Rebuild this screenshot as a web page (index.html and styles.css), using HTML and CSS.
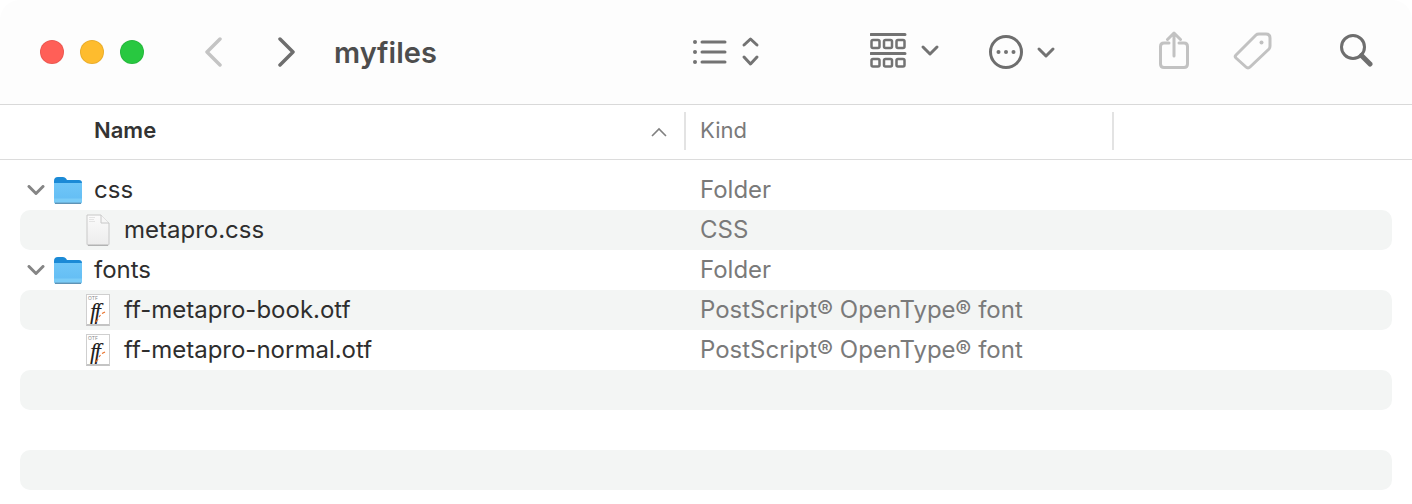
FILE: index.html
```html
<!DOCTYPE html>
<html lang="en">
<head>
    <meta charset="UTF-8">
    <title>myfiles</title>
    <link rel="stylesheet" href="styles.css">
</head>
<body>
    <svg class="defs" width="0" height="0">
        <defs>
            <linearGradient id="folder-body" x1="0" y1="0" x2="0" y2="1">
                <stop offset="0" stop-color="#6fc6f8"/>
                <stop offset="1" stop-color="#62bcf3"/>
            </linearGradient>
            <linearGradient id="doc-body" x1="0" y1="0" x2="0" y2="1">
                <stop offset="0" stop-color="#fbfbfb"/>
                <stop offset="1" stop-color="#ececec"/>
            </linearGradient>
            <symbol id="folder-shape" viewBox="0 0 28 27">
                <path d="M0 4 Q0 0 4 0 H9 Q11 0 12 1.5 L13 3 H25 Q28 3 28 6 V12 H0 Z" fill="#1b8ad6"/>
                <path d="M0 6 H28 V24 Q28 27 25 27 H3 Q0 27 0 24 Z" fill="url(#folder-body)"/>
                <path d="M0 21.5 H28 V24 Q28 27 25 27 H3 Q0 27 0 24 Z" fill="#7accf7"/>
                <path d="M1 26.3 H27" stroke="#5f93b5" stroke-width="1.4" fill="none"/>
            </symbol>
        </defs>
    </svg>

    <div class="window">
        <div class="toolbar">
            <div class="lights">
                <span class="light red"></span>
                <span class="light yellow"></span>
                <span class="light green"></span>
            </div>
            <svg class="nav nav-back" width="20" height="30" viewBox="0 0 20 30"><path d="M17 2 L4 15 L17 28" class="stroke-light"/></svg>
            <svg class="nav nav-forward" width="20" height="30" viewBox="0 0 20 30"><path d="M3 2 L16 15 L3 28" class="stroke-dark"/></svg>
            <div class="title">myfiles</div>
            <svg class="tool tool-list" width="70" height="32" viewBox="0 0 70 32">
                <path d="M11 6 H34 M11 16 H34 M11 26 H34" class="stroke-mid"/>
                <path d="M53 9 L59.5 3 L66 9 M53 21 L59.5 28 L66 21" class="stroke-mid"/>
                <circle cx="4" cy="6" r="2" class="fill-mid"/>
                <circle cx="4" cy="16" r="2" class="fill-mid"/>
                <circle cx="4" cy="26" r="2" class="fill-mid"/>
            </svg>
            <svg class="tool tool-group" width="70" height="36" viewBox="0 0 70 36">
                <path d="M1 1.5 H35 M1 20.5 H35" class="stroke-mid"/>
                <g class="box">
                    <rect x="1.5" y="7" width="8" height="8" rx="1.5"/>
                    <rect x="14" y="7" width="8" height="8" rx="1.5"/>
                    <rect x="26.5" y="7" width="8" height="8" rx="1.5"/>
                    <rect x="1.5" y="26" width="8" height="7.5" rx="1.5"/>
                    <rect x="14" y="26" width="8" height="7.5" rx="1.5"/>
                    <rect x="26.5" y="26" width="8" height="7.5" rx="1.5"/>
                </g>
                <path d="M53 14 L60 21 L67 14" class="stroke-mid"/>
            </svg>
            <svg class="tool tool-more" width="68" height="36" viewBox="0 0 68 36">
                <circle cx="18" cy="18" r="15.5" class="ring"/>
                <circle cx="10.5" cy="18" r="2" class="fill-mid"/>
                <circle cx="18" cy="18" r="2" class="fill-mid"/>
                <circle cx="25.5" cy="18" r="2" class="fill-mid"/>
                <path d="M51 15 L58 22 L65 15" class="stroke-mid"/>
            </svg>
            <svg class="tool tool-share" width="30" height="38" viewBox="0 0 30 38">
                <path d="M10 12 H5 Q1.5 12 1.5 15.5 V33 Q1.5 36.5 5 36.5 H25 Q28.5 36.5 28.5 33 V15.5 Q28.5 12 25 12 H20" class="thin-light"/>
                <path d="M15 25 V2.5 M8.5 8.5 L15 2 L21.5 8.5" class="thin-light"/>
            </svg>
            <svg class="tool tool-tag" width="40" height="40" viewBox="0 0 40 40">
                <path d="M3 25 L23 5 Q24 4 26 4 H33 Q37 4 37 8 V16 Q37 18 36 19 L17 37 Q15 39 13 37 L3 28 Q1.5 26.5 3 25 Z" class="thin-light"/>
                <circle cx="28.5" cy="12.5" r="2" class="fill-light"/>
            </svg>
            <svg class="tool tool-search" width="34" height="34" viewBox="0 0 34 34">
                <circle cx="14" cy="14" r="11.5" class="ring"/>
                <path d="M22.5 22.5 L31 31" class="stroke-handle"/>
            </svg>
        </div>

        <div class="columns">
            <div class="col col-name">
                <span class="col-text">Name</span>
                <svg class="sort" width="16" height="10" viewBox="0 0 16 10"><path d="M1 9 L8 2 L15 9"/></svg>
            </div>
            <div class="col col-kind"><span class="col-text">Kind</span></div>
            <div class="col col-rest"></div>
        </div>

        <div class="rows">
            <div class="row">
                <div class="name">
                    <svg class="disclosure" width="18" height="10" viewBox="0 0 18 10"><path d="M2 1.5 L9 8.5 L16 1.5"/></svg>
                    <svg class="folder" width="28" height="27" viewBox="0 0 28 27"><use href="#folder-shape"/></svg>
                    <span class="label">css</span>
                </div>
                <div class="kind label">Folder</div>
            </div>
            <div class="row striped">
                <div class="name child">
                    <svg class="doc" width="24" height="32" viewBox="0 0 24 32">
                        <path d="M1 1 H15 L23 9 V30 Q23 31 22 31 H2 Q1 31 1 30 Z" fill="url(#doc-body)" stroke="#c8c8c8"/>
                        <path d="M15 1 V9 H23" fill="#f6f6f6" stroke="#c8c8c8"/>
                        <path d="M2 31.3 H22" fill="none" stroke="#a8a8a8"/>
                        <path d="M3 3.5 H9 M3 5.5 H8 M3 7.5 H9" fill="none" stroke="#e4e4e4"/>
                    </svg>
                    <span class="label">metapro.css</span>
                </div>
                <div class="kind label">CSS</div>
            </div>
            <div class="row">
                <div class="name">
                    <svg class="disclosure" width="18" height="10" viewBox="0 0 18 10"><path d="M2 1.5 L9 8.5 L16 1.5"/></svg>
                    <svg class="folder" width="28" height="27" viewBox="0 0 28 27"><use href="#folder-shape"/></svg>
                    <span class="label">fonts</span>
                </div>
                <div class="kind label">Folder</div>
            </div>
            <div class="row striped">
                <div class="name child">
                    <div class="font-icon">
                        <span class="otf">OTF</span>
                        <span class="ff">ff</span>
                        <svg class="ff-marks" width="12" height="12" viewBox="0 0 12 12"><path d="M1 11 L3 8 M4 6 L5.5 4 M7 2.5 L10 1"/></svg>
                    </div>
                    <span class="label">ff-metapro-book.otf</span>
                </div>
                <div class="kind label">PostScript® OpenType® font</div>
            </div>
            <div class="row">
                <div class="name child">
                    <div class="font-icon">
                        <span class="otf">OTF</span>
                        <span class="ff">ff</span>
                        <svg class="ff-marks" width="12" height="12" viewBox="0 0 12 12"><path d="M1 11 L3 8 M4 6 L5.5 4 M7 2.5 L10 1"/></svg>
                    </div>
                    <span class="label">ff-metapro-normal.otf</span>
                </div>
                <div class="kind label">PostScript® OpenType® font</div>
            </div>
            <div class="row striped"></div>
            <div class="row"></div>
            <div class="row striped"></div>
        </div>
    </div>
</body>
</html>
```
FILE: styles.css
```css
html, body {
    margin: 0;
    height: 100%;
    background-color: #ffffff;
}

body {
    font-family: Inter, "Liberation Sans", sans-serif;
    overflow: hidden;
}

.defs {
    position: absolute;
}

.window {
    width: 1412px;
    height: 504px;
    display: flex;
    flex-direction: column;
}

/* toolbar */
.toolbar {
    height: 105px;
    flex: none;
    box-sizing: border-box;
    background-color: #fdfdfd;
    border-bottom: 1px solid #d9d9d9;
    border-radius: 20px 20px 0 0;
    display: flex;
    align-items: center;
}

.lights {
    display: flex;
    gap: 16px;
    margin-left: 40px;
}

.light {
    width: 24px;
    height: 24px;
    border-radius: 50%;
    box-sizing: border-box;
    border: 1px solid rgba(0, 0, 0, 0.08);
}

.red { background-color: #ff5f57; }
.yellow { background-color: #febc2e; }
.green { background-color: #28c840; }

.nav, .tool, .sort, .disclosure {
    flex: none;
    fill: none;
}

.nav-back { margin-left: 59px; }
.nav-forward { margin-left: 54px; }

.title {
    margin-left: 37px;
    width: 355px;
    font-size: 29px;
    font-weight: 600;
    color: #4d4d4d;
}

.tool-list { margin-left: 2px; }
.tool-group { margin-left: 109px; margin-top: -2px; }
.tool-more { margin-left: 48px; }
.tool-share { margin-left: 103px; margin-top: -4px; }
.tool-tag { margin-left: 44px; margin-top: -4px; }
.tool-search { margin-left: 66px; margin-top: -4px; }

.stroke-light {
    stroke: #c4c4c4;
    stroke-width: 3.5;
    stroke-linecap: round;
    stroke-linejoin: round;
}

.stroke-dark {
    stroke: #6e6e6e;
    stroke-width: 3.5;
    stroke-linecap: round;
    stroke-linejoin: round;
}

.stroke-mid {
    stroke: #737373;
    stroke-width: 3;
    stroke-linecap: round;
    stroke-linejoin: round;
}

.fill-mid { fill: #737373; }
.fill-light { fill: #c0c0c0; }

.box rect {
    stroke: #737373;
    stroke-width: 2.5;
}

.ring {
    stroke: #6e6e6e;
    stroke-width: 3;
}

.thin-light {
    stroke: #c2c2c2;
    stroke-width: 3;
    stroke-linecap: round;
    stroke-linejoin: round;
}

.stroke-handle {
    stroke: #6e6e6e;
    stroke-width: 5;
    stroke-linecap: round;
}

/* column headers */
.columns {
    height: 55px;
    flex: none;
    box-sizing: border-box;
    padding-bottom: 2px;
    border-bottom: 1px solid #dcdcdc;
    display: flex;
    align-items: center;
    font-size: 22px;
}

.col {
    height: 38px;
    display: flex;
    align-items: center;
    box-sizing: border-box;
}

.col-text {
    margin-bottom: 2px;
}

.col-name {
    width: 686px;
    padding-left: 94px;
    padding-right: 17px;
    justify-content: space-between;
    font-weight: 600;
    color: #333333;
    border-right: 2px solid #e3e3e3;
}

.col-kind {
    width: 428px;
    padding-left: 14px;
    color: #7a7a7a;
    border-right: 2px solid #e3e3e3;
}

.sort {
    margin-top: 2px;
    stroke: #808080;
    stroke-width: 1.6;
}

/* rows */
.rows {
    padding: 10px 20px 0;
}

.row {
    height: 40px;
    display: flex;
    align-items: center;
    border-radius: 10px;
    font-size: 24px;
}

.label {
    margin-bottom: 2px;
}

.striped { background-color: #f3f5f4; }

.name {
    width: 680px;
    display: flex;
    align-items: center;
    color: #2e2e2e;
}

.name.child {
    padding-left: 66px;
    box-sizing: border-box;
}

.kind { color: #7a7a7a; }

.disclosure {
    margin-left: 7px;
    stroke: #858585;
    stroke-width: 3;
    stroke-linecap: round;
    stroke-linejoin: round;
}

.folder {
    flex: none;
    margin-left: 9px;
    margin-right: 12px;
}

.doc {
    flex: none;
    margin-right: 14px;
}

/* otf thumbnail */
.font-icon {
    width: 24px;
    height: 32px;
    flex: none;
    box-sizing: border-box;
    margin-right: 14px;
    background-color: #ffffff;
    border: 1px solid #cfcfcf;
    border-bottom: 2px solid #c4c4c4;
    position: relative;
    overflow: hidden;
}

.otf {
    position: absolute;
    left: 1px;
    top: 0;
    font-size: 5px;
    line-height: 6px;
    color: #888888;
}

.ff {
    position: absolute;
    left: 3px;
    top: 7px;
    font-family: "Liberation Serif", serif;
    font-style: italic;
    font-size: 23px;
    line-height: 20px;
    letter-spacing: -2px;
    color: #222222;
}

.ff-marks {
    position: absolute;
    left: 8px;
    top: 16px;
    fill: none;
    stroke: #e8702a;
    stroke-width: 1.2;
}
```
